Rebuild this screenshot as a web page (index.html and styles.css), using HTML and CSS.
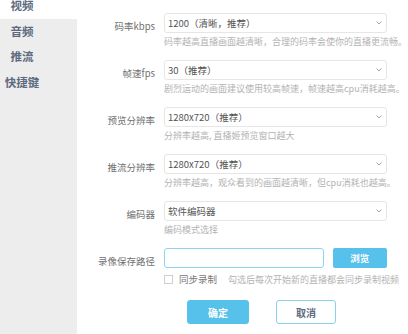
FILE: index.html
```html
<!DOCTYPE html>
<html lang="zh">
<head>
<meta charset="utf-8">
<title>设置</title>
<link rel="stylesheet" href="styles.css">
</head>
<body>
<div class="app">
  <nav class="sidebar">
    <div class="nav-item active"><span>视频</span></div>
    <div class="nav-item"><span>音频</span></div>
    <div class="nav-item"><span>推流</span></div>
    <div class="nav-item"><span>快捷键</span></div>
  </nav>
  <main class="content">
    <div class="row">
      <div class="label">码率kbps</div>
      <div class="field">
        <div class="select"><span>1200（清晰，推荐）</span><svg class="chev" viewBox="0 0 6 4" width="6" height="4"><path d="M0.5 0.5 L3 3 L5.5 0.5" fill="none" stroke="#9a9a9a" stroke-width="0.9"/></svg></div>
        <div class="hint">码率越高直播画面越清晰，合理的码率会使你的直播更流畅。</div>
      </div>
    </div>
    <div class="row">
      <div class="label">帧速fps</div>
      <div class="field">
        <div class="select"><span>30（推荐）</span><svg class="chev" viewBox="0 0 6 4" width="6" height="4"><path d="M0.5 0.5 L3 3 L5.5 0.5" fill="none" stroke="#9a9a9a" stroke-width="0.9"/></svg></div>
        <div class="hint">剧烈运动的画面建议使用较高帧速，帧速越高cpu消耗越高。</div>
      </div>
    </div>
    <div class="row">
      <div class="label">预览分辨率</div>
      <div class="field">
        <div class="select"><span>1280x720（推荐）</span><svg class="chev" viewBox="0 0 6 4" width="6" height="4"><path d="M0.5 0.5 L3 3 L5.5 0.5" fill="none" stroke="#9a9a9a" stroke-width="0.9"/></svg></div>
        <div class="hint">分辨率越高, 直播姬预览窗口越大</div>
      </div>
    </div>
    <div class="row">
      <div class="label">推流分辨率</div>
      <div class="field">
        <div class="select"><span>1280x720（推荐）</span><svg class="chev" viewBox="0 0 6 4" width="6" height="4"><path d="M0.5 0.5 L3 3 L5.5 0.5" fill="none" stroke="#9a9a9a" stroke-width="0.9"/></svg></div>
        <div class="hint">分辨率越高，观众看到的画面越清晰，但cpu消耗也越高。</div>
      </div>
    </div>
    <div class="row">
      <div class="label">编码器</div>
      <div class="field">
        <div class="select"><span>软件编码器</span><svg class="chev" viewBox="0 0 6 4" width="6" height="4"><path d="M0.5 0.5 L3 3 L5.5 0.5" fill="none" stroke="#9a9a9a" stroke-width="0.9"/></svg></div>
        <div class="hint">编码模式选择</div>
      </div>
    </div>
    <div class="row row-path">
      <div class="label">录像保存路径</div>
      <div class="field">
        <div class="path-line">
          <div class="path-input"></div>
          <button class="btn-browse">浏览</button>
        </div>
        <div class="check-line">
          <span class="checkbox"></span>
          <span class="check-label">同步录制</span>
          <span class="check-hint">勾选后每次开始新的直播都会同步录制视频</span>
        </div>
      </div>
    </div>
    <div class="actions">
      <button class="btn btn-ok">确定</button>
      <button class="btn btn-cancel">取消</button>
    </div>
  </main>
</div>
</body>
</html>
```

FILE: styles.css
```css
html, body {
  margin: 0;
  padding: 0;
  background: #ffffff;
}
body {
  font-family: "Noto Sans CJK SC", "Noto Sans", sans-serif;
  width: 408px;
  height: 334px;
  overflow: hidden;
}
.app {
  display: flex;
  height: 334px;
}
.sidebar {
  width: 77px;
  flex: none;
  background: #ededed;
  display: flex;
  flex-direction: column;
  margin-top: -7px;
  height: 341px;
}
.nav-item {
  height: 25.5px;
  line-height: 25.5px;
  padding-right: 33px;
  text-align: center;
  font-size: 11.5px;
  font-weight: 700;
  color: #5d6b80;
}
.nav-item.active {
  background: #ffffff;
}
.content {
  flex: 1;
  padding-top: 13px;
}
.row {
  display: flex;
  height: 47px;
}
.label {
  width: 78px;
  text-align: right;
  font-size: 9.5px;
  color: #707070;
  line-height: 20px;
  margin-top: 3px;
  flex: none;
}
.field {
  margin-left: 9px;
  width: 223px;
}
.select {
  height: 20px;
  box-sizing: border-box;
  border: 1px solid #e6e6e6;
  border-radius: 3px;
  display: flex;
  align-items: center;
  justify-content: space-between;
  padding: 0 4px 0 3px;
  font-size: 9.5px;
  color: #555555;
}
.chev {
  display: block;
}
.hint {
  margin-top: 3px;
  line-height: 12px;
  font-size: 9px;
  color: #b3b3b3;
  white-space: nowrap;
}
.path-line {
  display: flex;
  gap: 9px;
  height: 20px;
}
.path-input {
  width: 161px;
  height: 20px;
  box-sizing: border-box;
  border: 1px solid #8ed4f0;
  border-radius: 3px;
}
.btn-browse {
  width: 55px;
  height: 20px;
  border: none;
  border-radius: 2px;
  background: #56c1ea;
  color: #ffffff;
  font-family: inherit;
  font-size: 9.5px;
  font-weight: 700;
  padding: 0;
}
.check-line {
  display: flex;
  align-items: center;
  margin-top: 5px;
  height: 12px;
  font-size: 9.5px;
  white-space: nowrap;
}
.checkbox {
  flex: none;
  width: 7px;
  height: 7px;
  border: 1px solid #cfcfcf;
  margin-right: 6px;
}
.check-label {
  flex: none;
  color: #777777;
  margin-right: 11px;
}
.check-hint {
  flex: none;
  font-size: 9px;
  color: #b3b3b3;
}
.actions {
  display: flex;
  gap: 27px;
  padding-left: 110px;
  margin-top: 5px;
}
.btn {
  width: 62px;
  height: 24px;
  box-sizing: border-box;
  border-radius: 3px;
  font-family: inherit;
  font-size: 10px;
  font-weight: 700;
  padding: 0;
}
.btn-ok {
  background: #56c1ea;
  border: 1px solid #56c1ea;
  color: #ffffff;
}
.btn-cancel {
  width: 60px;
  background: #ffffff;
  border: 1px solid #86d2f0;
  color: #5d6b80;
}
```
